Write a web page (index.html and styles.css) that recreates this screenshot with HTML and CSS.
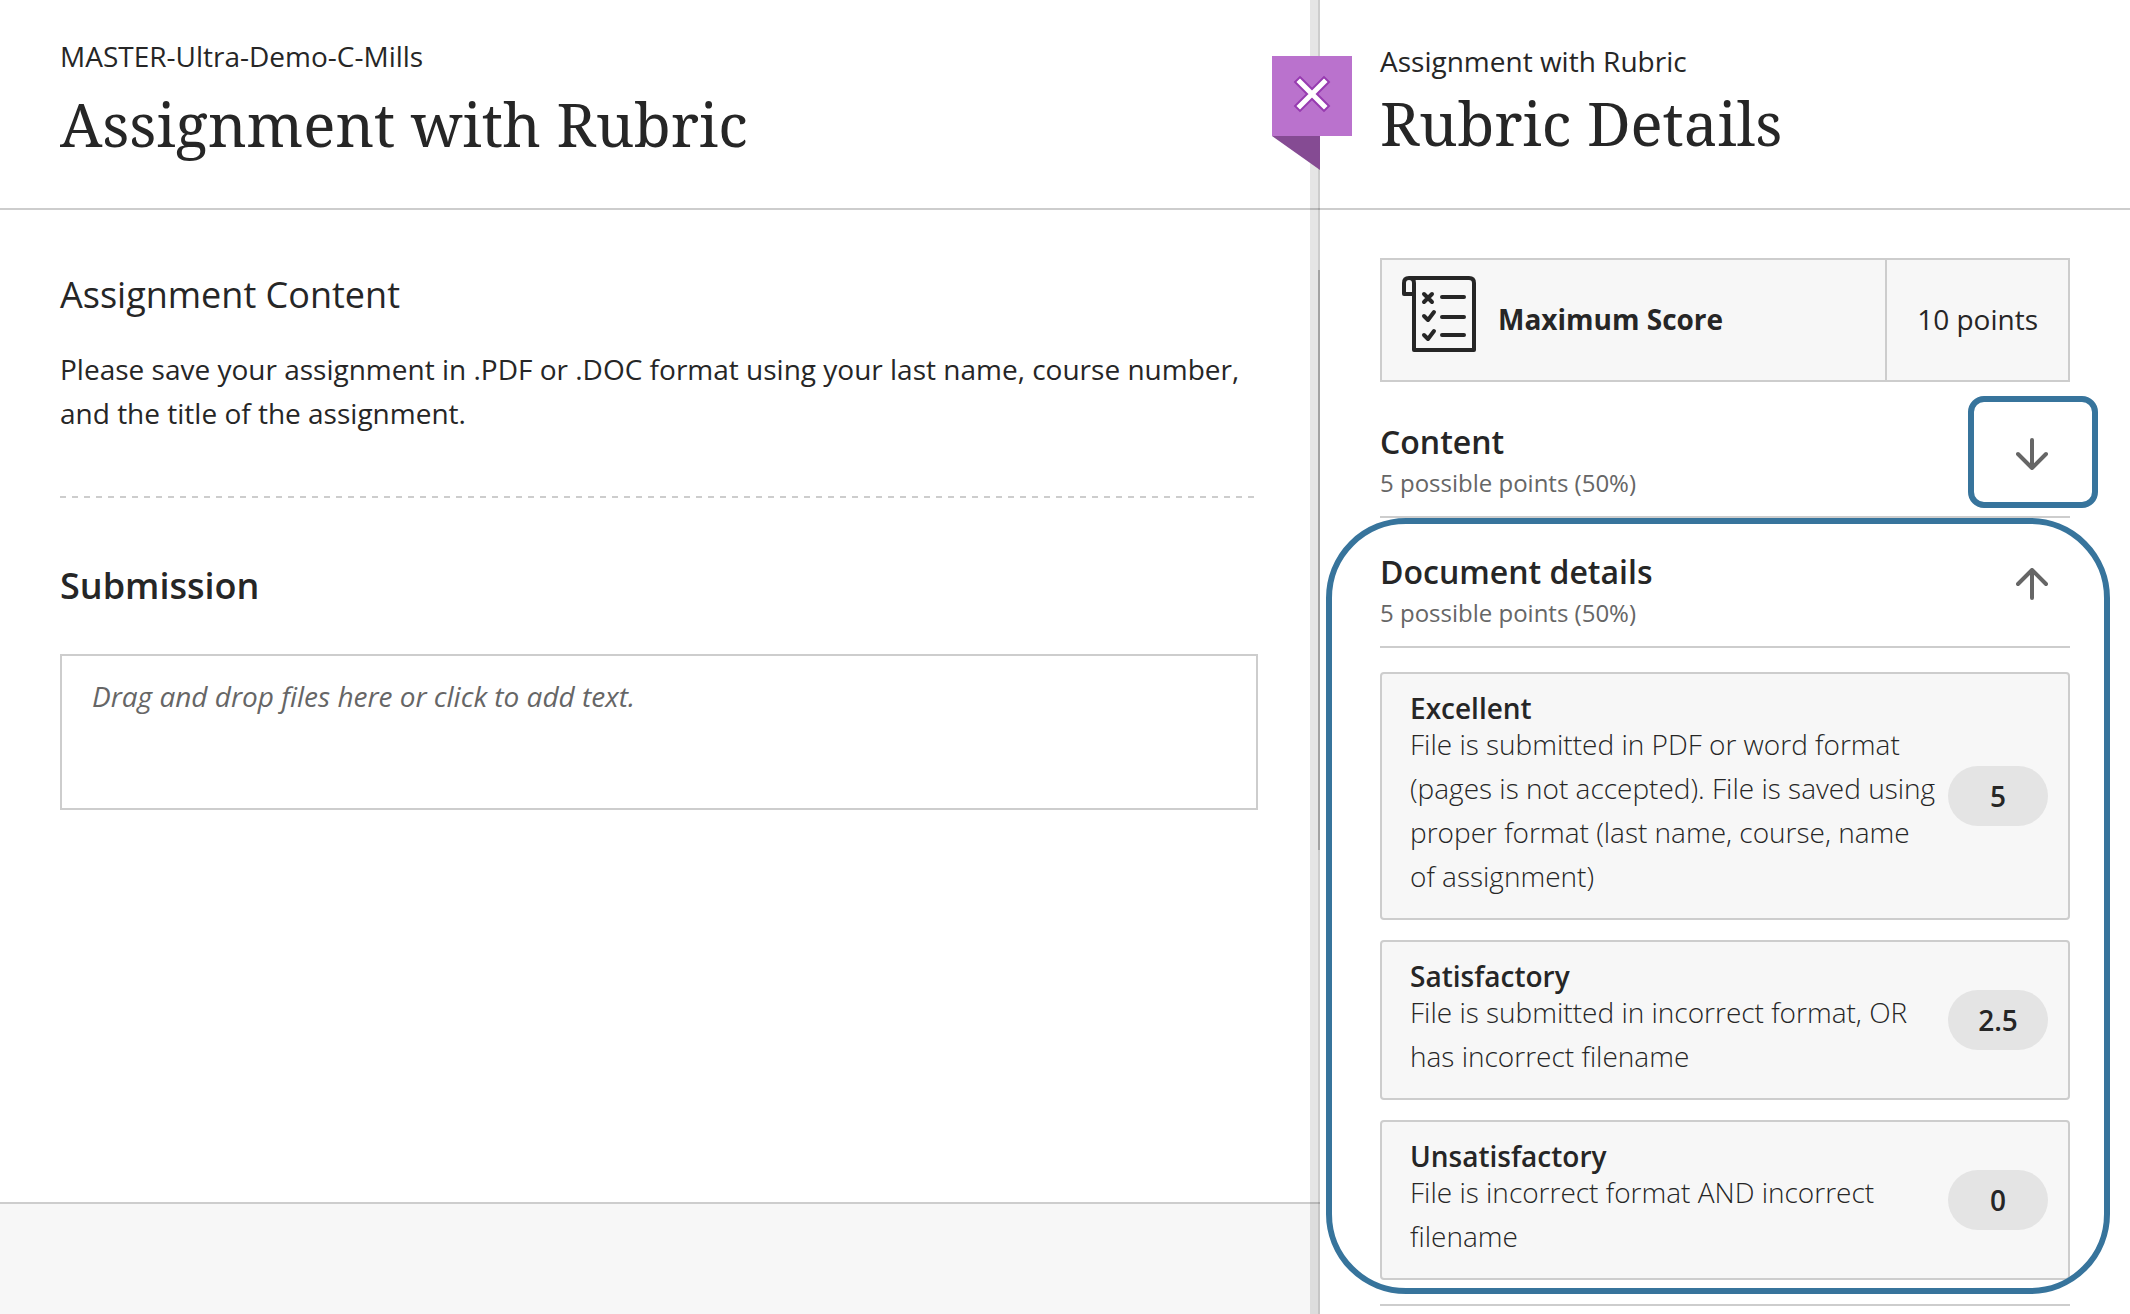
FILE: index.html
```html
<!DOCTYPE html>
<html lang="en">
<head>
    <meta charset="UTF-8">
    <meta name="viewport" content="width=device-width, initial-scale=1.0">
    <title>Assignment with Rubric</title>
    <link rel="stylesheet" href="styles.css">
</head>
<body>
    <div class="page">
        <div class="assignment">
            <header class="panel-header">
                <p class="course">MASTER-Ultra-Demo-C-Mills</p>
                <h1>Assignment with Rubric</h1>
            </header>
            <main class="assignment-body">
                <h2>Assignment Content</h2>
                <p class="instructions">Please save your assignment in .PDF or .DOC format using your last name, course number, and the title of the assignment.</p>
                <hr>
                <h2 class="submission-title"><label for="submission">Submission</label></h2>
                <textarea id="submission" placeholder="Drag and drop files here or click to add text."></textarea>
            </main>
            <footer class="assignment-footer"></footer>
            <div class="divider"><div class="scroll-thumb"></div></div>
        </div>

        <aside class="rubric">
            <button class="close" type="button" aria-label="Close">
                <svg viewBox="0 0 80 80" width="80" height="80">
                    <path d="M28 26 L52 50 M52 26 L28 50" stroke="#973bb0" stroke-width="9" stroke-linecap="square"/>
                    <path d="M28 26 L52 50 M52 26 L28 50" stroke="#fff" stroke-width="5" stroke-linecap="square"/>
                </svg>
            </button>
            <header class="panel-header rubric-header">
                <p>Assignment with Rubric</p>
                <h1>Rubric Details</h1>
            </header>
            <div class="rubric-body">
                <div class="max-score">
                    <div class="max-label">
                        <svg viewBox="0 0 74 76" width="74" height="76" fill="none" stroke="#262626" stroke-width="4" stroke-linecap="round" stroke-linejoin="round">
                            <path d="M7 2 H67 Q72 2 72 7 V74 H12 V7 Q12 2 7 2 Q2 2 2 7 V18 H11"/>
                            <path d="M40 21 H62 M40 41 H62 M40 59 H62"/>
                            <path d="M22 18 L30 26 M30 18 L22 26 M22 40 L26 44 L32 36 M22 59 L26 63 L32 55"/>
                        </svg>
                        <strong>Maximum Score</strong>
                    </div>
                    <div class="max-points">10 points</div>
                </div>

                <section class="criterion">
                    <div class="criterion-head">
                        <div class="criterion-text">
                            <h3>Content</h3>
                            <p>5 possible points (50%)</p>
                        </div>
                        <button class="toggle highlighted" type="button" aria-label="Expand Content">
                            <svg viewBox="0 0 32 32" width="32" height="32"><path d="M16 2 V30 M2 16 L16 30 L30 16"/></svg>
                        </button>
                    </div>
                </section>

                <section class="criterion open">
                    <div class="criterion-head">
                        <div class="criterion-text">
                            <h3>Document details</h3>
                            <p>5 possible points (50%)</p>
                        </div>
                        <button class="toggle" type="button" aria-label="Collapse Document details">
                            <svg viewBox="0 0 32 32" width="32" height="32"><path d="M16 30 V2 M2 16 L16 2 L30 16"/></svg>
                        </button>
                    </div>
                    <div class="levels">
                        <div class="level">
                            <div class="level-text">
                                <h4>Excellent</h4>
                                <p>File is submitted in PDF or word format (pages is not accepted). File is saved using proper format (last name, course, name of assignment)</p>
                            </div>
                            <span class="score">5</span>
                        </div>
                        <div class="level">
                            <div class="level-text">
                                <h4>Satisfactory</h4>
                                <p>File is submitted in incorrect format, OR has incorrect filename</p>
                            </div>
                            <span class="score">2.5</span>
                        </div>
                        <div class="level">
                            <div class="level-text">
                                <h4>Unsatisfactory</h4>
                                <p>File is incorrect format AND incorrect filename</p>
                            </div>
                            <span class="score">0</span>
                        </div>
                    </div>
                    <div class="frame"></div>
                </section>
            </div>
        </aside>
    </div>
</body>
</html>
```
FILE: styles.css
```css
* {
    box-sizing: border-box;
}

body {
    margin: 0;
    background-color: #fff;
    color: #262626;
    font-family: "Open Sans", "Noto Sans", sans-serif;
    font-size: 28px;
    line-height: 44px;
}

h1, h2, h3, h4, p {
    margin: 0;
}

.page {
    display: grid;
    grid-template-columns: 44fr 27fr;
    min-height: 100vh;
}

.panel-header {
    min-height: 210px;
    padding: 34px 60px 0;
    border-bottom: 2px solid #cdcdcd;
}

.panel-header h1 {
    font-family: "Noto Serif", "Droid Serif", "Liberation Serif", serif;
    font-size: 60px;
    font-weight: 400;
    line-height: 80px;
}

.course {
    margin-bottom: 6px;
}

/* assignment */
.assignment {
    position: relative;
    display: flex;
    flex-direction: column;
}

.assignment-body {
    flex: 1;
    padding: 61px 62px 0 60px;
}

h2 {
    font-size: 36px;
    font-weight: 400;
    line-height: 48px;
}

.instructions {
    margin-top: 28px;
}

hr {
    height: 2px;
    margin: 61px 0 64px;
    border: 0;
    background: repeating-linear-gradient(to right, #cdcdcd 0 6px, transparent 6px 12px);
}

.submission-title {
    margin-bottom: 44px;
    font-weight: 600;
}

textarea {
    display: block;
    width: 100%;
    height: 156px;
    padding: 18px 30px;
    border: 2px solid #cdcdcd;
    border-radius: 0;
    background-color: #fff;
    color: #262626;
    font: inherit;
    resize: none;
}

textarea::placeholder {
    color: #666;
    font-style: italic;
    opacity: 1;
}

.assignment-footer {
    height: 112px;
    border-top: 2px solid #cdcdcd;
    background-color: #f7f7f7;
}

.divider {
    position: absolute;
    top: 0;
    right: 0;
    bottom: 0;
    width: 10px;
    border-right: 2px solid rgba(0, 0, 0, 0.1);
    background-color: rgba(0, 0, 0, 0.1);
}

.scroll-thumb {
    position: absolute;
    top: 270px;
    right: -2px;
    width: 2px;
    height: 580px;
    background-color: #a3a3a3;
}

/* rubric */
.rubric {
    position: relative;
}

.rubric-header {
    padding-top: 39px;
}

.close {
    position: absolute;
    top: 56px;
    left: -48px;
    width: 80px;
    height: 80px;
    padding: 0;
    border: 0;
    background-color: #ba72cd;
    cursor: pointer;
}

.close::after {
    content: "";
    position: absolute;
    top: 80px;
    left: 0;
    width: 48px;
    height: 34px;
    background-color: #854b93;
    clip-path: polygon(0 0, 100% 0, 100% 100%);
}

.close svg {
    display: block;
}

.rubric-body {
    padding: 48px 60px 0;
}

.max-score {
    display: flex;
    margin-bottom: 6px;
    border: 2px solid #cdcdcd;
    background-color: #f7f7f7;
}

.max-label {
    display: flex;
    flex: 1;
    align-items: center;
    gap: 22px;
    padding: 16px 20px 28px;
}

.max-label strong {
    padding-top: 10px;
}

.max-points {
    display: flex;
    align-items: center;
    padding: 0 30px 2px;
    border-left: 2px solid #cdcdcd;
}

.criterion {
    position: relative;
}

.criterion-head {
    display: flex;
    justify-content: space-between;
    padding: 8px 0;
    border-bottom: 2px solid #cdcdcd;
}

.criterion-text {
    padding-top: 24px;
}

h3 {
    font-size: 32px;
    font-weight: 600;
    line-height: 44px;
}

.criterion-text p {
    color: #666;
    font-size: 24px;
    line-height: 38px;
}

.toggle {
    display: flex;
    align-items: center;
    justify-content: center;
    width: 130px;
    height: 112px;
    margin-right: -28px;
    padding: 4px 2px 0 0;
    border: 6px solid transparent;
    border-radius: 16px;
    background-color: transparent;
    cursor: pointer;
}

.toggle svg {
    fill: none;
    stroke: #666;
    stroke-width: 4;
    stroke-linecap: round;
    stroke-linejoin: round;
}

.toggle.highlighted {
    border-color: #37749c;
}

.levels {
    display: flex;
    flex-direction: column;
    gap: 20px;
    padding: 24px 0;
    border-bottom: 2px solid #cdcdcd;
}

.level {
    display: flex;
    align-items: center;
    justify-content: space-between;
    gap: 12px;
    padding: 20px 20px 20px 28px;
    border: 2px solid #cdcdcd;
    border-radius: 4px;
    background-color: #f7f7f7;
}

h4 {
    font-size: 28px;
    font-weight: 600;
    line-height: 28px;
}

.level-text p {
    font-weight: 300;
}

.score {
    flex: none;
    width: 100px;
    border-radius: 30px;
    background-color: #e4e4e4;
    font-weight: 600;
    line-height: 60px;
    text-align: center;
}

.frame {
    position: absolute;
    top: 0;
    right: -40px;
    bottom: 12px;
    left: -54px;
    border: 6px solid #37749c;
    border-radius: 80px;
    pointer-events: none;
}
```
